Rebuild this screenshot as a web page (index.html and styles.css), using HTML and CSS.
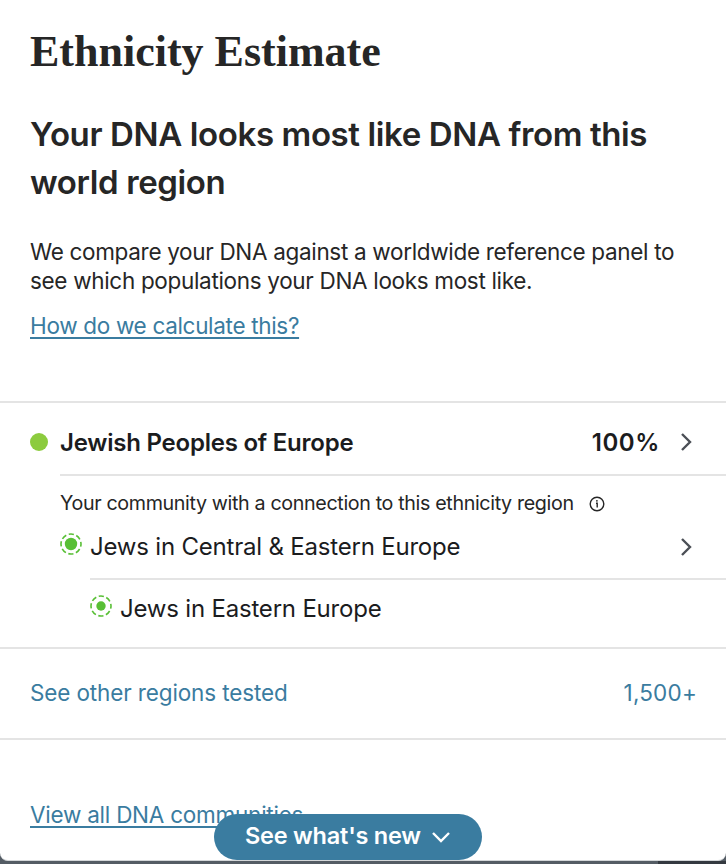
FILE: index.html
```html
<!DOCTYPE html>
<html lang="en">
<head>
  <meta charset="UTF-8">
  <meta name="viewport" content="width=device-width, initial-scale=1.0">
  <title>Ethnicity Estimate</title>
  <link rel="stylesheet" href="styles.css">
</head>
<body>
  <main class="panel">
    <header class="intro">
      <h1 class="title">Ethnicity Estimate</h1>
      <h2 class="subtitle">Your DNA looks most like DNA from this<br>world region</h2>
      <p class="description">We compare your DNA against a worldwide reference panel to<br>see which populations your DNA looks most like.</p>
      <a class="link" href="#">How do we calculate this?</a>
    </header>

    <section class="regions">
      <div class="region">
        <span class="region-dot"></span>
        <div class="region-row">
          <span class="region-name">Jewish Peoples of Europe</span>
          <span class="region-percent">100%</span>
          <svg class="chevron" viewBox="0 0 12 20"><path d="M2 2l8 8-8 8"/></svg>
        </div>
      </div>

      <div class="communities">
        <div class="community-note">
          <span class="note-text">Your community with a connection to this ethnicity region</span>
          <svg class="info" viewBox="0 0 16 16">
            <circle cx="8" cy="8" r="6.8"/>
            <path d="M7 7.2h1.2v4.3"/>
            <circle class="info-dot" cx="7.9" cy="4.8" r=".9"/>
          </svg>
        </div>
        <div class="community">
          <svg class="community-icon" viewBox="0 0 22 22">
            <circle class="ring" cx="11" cy="11" r="10"/>
            <circle class="core" cx="11" cy="11" r="6.2"/>
          </svg>
          <div class="community-row">
            <span class="community-name">Jews in Central &amp; Eastern Europe</span>
            <svg class="chevron" viewBox="0 0 12 20"><path d="M2 2l8 8-8 8"/></svg>
          </div>
        </div>
        <div class="community sub">
          <svg class="community-icon" viewBox="0 0 22 22">
            <circle class="ring" cx="11" cy="11" r="10"/>
            <circle class="core" cx="11" cy="11" r="4.7"/>
          </svg>
          <span class="community-name">Jews in Eastern Europe</span>
        </div>
      </div>
    </section>

    <a class="tested" href="#">
      <span class="tested-label">See other regions tested</span>
      <span class="tested-count">1,500+</span>
    </a>

    <footer class="footer">
      <a class="link" href="#">View all DNA communities</a>
    </footer>
  </main>

  <div class="backdrop-corner"></div>

  <button class="whats-new">
    <span>See what's new</span>
    <svg viewBox="0 0 20 12"><path d="M2 2l8 8 8-8"/></svg>
  </button>
</body>
</html>
```

FILE: styles.css
```css
* {
  margin: 0;
  padding: 0;
  box-sizing: border-box;
}

html, body {
  height: 864px;
  overflow: hidden;
}

body {
  position: relative;
  background: #545c64;
  color: #262626;
  font-family: Inter, "Liberation Sans", sans-serif;
  font-size: 22.5px;
  letter-spacing: -0.32px;
  white-space: nowrap;
}

.panel {
  height: 861px;
  background: #fff;
  border-bottom: 1px solid #d4d7d9;
  border-radius: 0 0 8px 8px;
  overflow: hidden;
}

.intro {
  height: 403px;
  padding: 22px 30px 0;
  border-bottom: 2px solid #e4e4e4;
}

.title {
  height: 60px;
  font-family: "Liberation Serif", serif;
  font-size: 44px;
  letter-spacing: 0;
  line-height: 60px;
}

.subtitle {
  margin-top: 28px;
  font-size: 33px;
  font-weight: 600;
  letter-spacing: -0.38px;
  line-height: 48px;
}

.description {
  margin-top: 31px;
  line-height: 29px;
}

.link {
  display: inline-block;
  margin-top: 16px;
  color: #3a7ca0;
  line-height: 30px;
  text-decoration-thickness: 1.5px;
  text-underline-offset: 3px;
}

.regions {
  height: 246px;
  border-bottom: 2px solid #e4e4e4;
}

.region {
  display: flex;
  align-items: center;
  height: 73px;
  padding-left: 30px;
}

.region-dot {
  width: 18px;
  height: 18px;
  margin: 4px 12px 0 0;
  border-radius: 50%;
  background: #8ccb3e;
}

.region-row {
  flex: 1;
  display: flex;
  align-items: center;
  height: 73px;
  padding: 7px 34px 0 0;
  border-bottom: 2px solid #e4e4e4;
  color: #1b1c1e;
  font-size: 24px;
  font-weight: 600;
  letter-spacing: -0.23px;
}

.region-percent {
  margin-left: auto;
  letter-spacing: 0.6px;
}

.chevron {
  width: 12px;
  height: 20px;
  margin-left: 22px;
  fill: none;
  stroke: #4b4f56;
  stroke-width: 2.4;
}

.region-row .chevron {
  margin-left: 20px;
}

.communities {
  padding-left: 60px;
}

.community-note {
  display: flex;
  align-items: center;
  height: 55px;
  padding-bottom: 2px;
  font-size: 19.7px;
  letter-spacing: -0.36px;
}

.info {
  width: 16px;
  height: 16px;
  margin: 2px 0 0 15px;
  fill: none;
  stroke: #262626;
  stroke-width: 1.4;
}

.info-dot {
  fill: #262626;
  stroke: none;
}

.community {
  display: flex;
  height: 49px;
  color: #1b1c1e;
  font-size: 24px;
  letter-spacing: -0.2px;
}

.community-icon {
  width: 22px;
  height: 22px;
  margin: 2px 8px 0 0;
}

.ring {
  fill: none;
  stroke: #58bf35;
  stroke-width: 1.6;
  stroke-dasharray: 5.25 2.6;
  stroke-dashoffset: 2.6;
}

.core {
  fill: #58bf35;
}

.community-row {
  flex: 1;
  display: flex;
  justify-content: space-between;
  padding-right: 34px;
  border-bottom: 2px solid #e4e4e4;
}

.community-row .chevron {
  margin-top: 6px;
}

.community-name {
  line-height: 32px;
}

.community.sub {
  padding: 13px 0 0 30px;
  height: 62px;
}

.tested {
  display: flex;
  justify-content: space-between;
  height: 91px;
  padding: 0 29px 0 30px;
  border-bottom: 2px solid #e4e4e4;
  color: #3a7ca0;
  letter-spacing: -0.13px;
  line-height: 87px;
  text-decoration: none;
}

.tested-count {
  letter-spacing: 0.2px;
}

.footer {
  padding: 44px 30px 0;
  letter-spacing: -0.24px;
}

/* dark sliver of the page behind the panel */
.backdrop-corner {
  width: 68px;
  height: 3px;
  margin-left: auto;
  background: #343940;
}

.whats-new {
  position: absolute;
  left: 214px;
  top: 814px;
  display: flex;
  align-items: center;
  width: 268px;
  height: 46px;
  padding: 0 31px;
  border: 0;
  border-radius: 23px;
  background: #3a7ca0;
  color: #fff;
  font: 600 23.5px/42px Inter, "Liberation Sans", sans-serif;
  letter-spacing: -0.22px;
}

.whats-new span {
  margin-top: -2px;
}

.whats-new svg {
  width: 20px;
  height: 12px;
  margin-left: auto;
  fill: none;
  stroke: #fff;
  stroke-width: 2.4;
}
```
